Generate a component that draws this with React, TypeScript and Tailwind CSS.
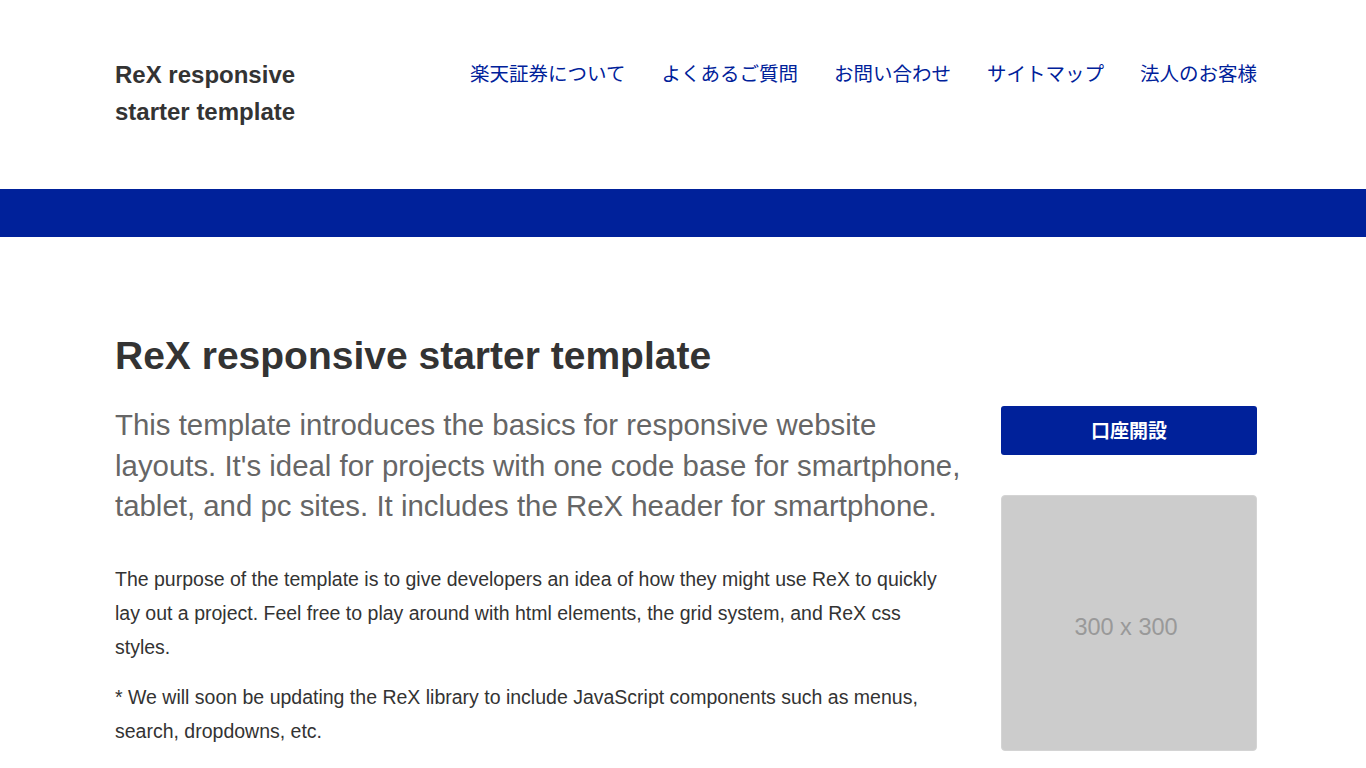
import React from "react";

const sans = "font-['Liberation_Sans','Noto_Sans_CJK_JP',sans-serif]";

export default function App() {
  const nav = ["楽天証券について", "よくあるご質問", "お問い合わせ", "サイトマップ", "法人のお客様"];
  return (
    <div className={`${sans} bg-white min-h-screen text-[#333]`}>
      <header className="h-[189px] pl-[115px] pr-[109px] flex justify-between items-start">
        <div className="pt-[56px] text-[24px] font-bold leading-[37px] text-[#333]">
          ReX responsive
          <br />
          starter template
        </div>
        <nav className="pt-[58px] flex gap-[36px] text-[19.5px] leading-[30px] text-[#00219a] font-['Noto_Sans_CJK_JP',sans-serif]">
          {nav.map((n) => (
            <a key={n} href="#" className="whitespace-nowrap">
              {n}
            </a>
          ))}
        </nav>
      </header>
      <div className="h-[48px] bg-[#00219a]" />
      <main className="pl-[115px] pr-[109px] pt-[96px] flex gap-[41px]">
        <div className="flex-1 min-w-0">
          <h1 className="text-[39px] font-bold leading-[46px] text-[#333]">ReX responsive starter template</h1>
          <p className="mt-[26px] text-[29.4px] leading-[40.5px] text-[#666] whitespace-nowrap">
            This template introduces the basics for responsive website
            <br />
            layouts. It's ideal for projects with one code base for smartphone,
            <br />
            tablet, and pc sites. It includes the ReX header for smartphone.
          </p>
          <p className="mt-[35px] text-[19.5px] leading-[34px] text-[#333]">
            The purpose of the template is to give developers an idea of how they might use ReX to quickly lay out a project. Feel free to play around with html elements, the grid system, and ReX css styles.
          </p>
          <p className="mt-[16px] text-[19.5px] leading-[34px] text-[#333]">
            * We will soon be updating the ReX library to include JavaScript components such as menus, search, dropdowns, etc.
          </p>
        </div>
        <aside className="w-[256px] pt-[73px] shrink-0">
          <a
            href="#"
            className="flex h-[49px] items-center justify-center rounded-[3px] bg-[#00219a] text-white text-[19px] font-bold font-['Noto_Sans_CJK_JP',sans-serif]"
          >
            口座開設
          </a>
          <div className="mt-[40px] h-[256px] rounded-[4px] border border-[#d4d4d4] bg-[#cccccc] flex items-center justify-center pt-[10px] pr-[6px] text-[23.5px] text-[#999]">
            300 x 300
          </div>
        </aside>
      </main>
    </div>
  );
}
